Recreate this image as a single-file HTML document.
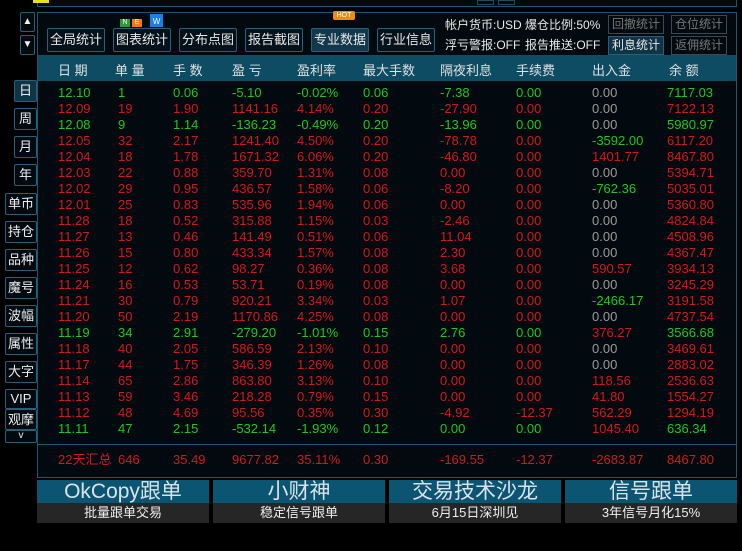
<!DOCTYPE html>
<html><head><meta charset="utf-8"><style>
*{margin:0;padding:0;box-sizing:border-box}
body{width:742px;height:551px;background:#000;position:relative;overflow:hidden;font-family:"Liberation Sans","Noto Sans CJK SC",sans-serif;font-size:13px;color:#ddd}
.a{position:absolute}
.panel{border:1px solid #1d5670;background:#020a10}
.btn{position:absolute;border:1px solid #2b5f78;border-radius:2px;color:#e8e8e8;text-align:center;font-size:13px;background:#03121a}
.sb{position:absolute;border:1px solid #2b5f78;border-radius:2px;color:#eee;text-align:center;background:#020a10;font-size:13px}
.hd{position:absolute;top:55px;left:38px;width:698px;height:26px;background:#0e4c63}
.hd span{position:absolute;top:5px;color:#e0e0e0;font-size:13px}
.r{position:absolute;left:38px;width:698px;height:16px;line-height:16px}
.r span{position:absolute}
.r span:nth-child(1){left:20px}.r span:nth-child(2){left:80px}.r span:nth-child(3){left:135px}.r span:nth-child(4){left:194px}.r span:nth-child(5){left:259px}.r span:nth-child(6){left:325px}.r span:nth-child(7){left:402px}.r span:nth-child(8){left:478px}.r span:nth-child(9){left:554px}.r span:nth-child(10){left:629px}
.g{color:#23c41f}.d{color:#d11a1a}.y{color:#9a9a9a}
.ban{position:absolute;top:480px;width:172px;height:43px}
.ban .t{height:23px;background:#0b5572;color:#d8e4ea;font-size:21px;text-align:center;line-height:24px}
.ban .b{height:20px;background:#262626;color:#eee;font-size:13px;text-align:center;line-height:20px}
.sm{position:absolute;border:1px solid #3a4a52;color:#777;font-size:12px;text-align:center;height:19px;line-height:17px;width:58px}
</style></head><body>
<div class="a panel" style="left:37px;top:-2px;width:700px;height:9px"></div>
<div class="a" style="left:33px;top:0;width:16px;height:3px;background:#e8e020"></div>
<div class="a" style="left:477px;top:0;width:17px;height:5px;border:1px solid #244a5a"></div>
<div class="a" style="left:498px;top:0;width:17px;height:5px;border:1px solid #244a5a"></div>
<div class="a panel" style="left:37px;top:12px;width:700px;height:466px"></div>
<div class="sb" style="left:20px;top:12px;width:15px;height:20px;font-size:10px;line-height:18px">▲</div>
<div class="sb" style="left:20px;top:35px;width:15px;height:20px;font-size:10px;line-height:18px">▼</div>
<div class="btn" style="left:47px;top:28px;width:58px;height:24px;line-height:22px">全局统计</div>
<div class="btn" style="left:113px;top:28px;width:58px;height:24px;line-height:22px">图表统计</div>
<div class="btn" style="left:179px;top:28px;width:58px;height:24px;line-height:22px">分布点图</div>
<div class="btn" style="left:245px;top:28px;width:58px;height:24px;line-height:22px">报告截图</div>
<div class="btn" style="left:311px;top:28px;width:58px;height:24px;line-height:22px;background:#11394b">专业数据</div>
<div class="btn" style="left:377px;top:28px;width:58px;height:24px;line-height:22px">行业信息</div>
<div class="a" style="left:120px;top:19px;width:10px;height:8px;background:#2e9a3c;color:#fff;font-size:7px;text-align:center;line-height:8px">N</div>
<div class="a" style="left:132px;top:19px;width:10px;height:8px;background:#f07c10;color:#fff;font-size:7px;text-align:center;line-height:8px">E</div>
<div class="a" style="left:150px;top:14px;width:13px;height:13px;background:#1a7ee8;color:#fff;font-size:8px;text-align:center;line-height:16px">W</div>
<div class="a" style="left:333px;top:11px;width:22px;height:9px;background:#f08a10;color:#fff;font-size:7px;text-align:center;line-height:9px;border-radius:2px">HOT</div>
<div class="a" style="left:445px;top:16px;color:#e8e8e8;font-size:12px">帐户货币:USD</div>
<div class="a" style="left:525px;top:16px;color:#e8e8e8;font-size:12px">爆仓比例:50%</div>
<div class="a" style="left:445px;top:36px;color:#e8e8e8;font-size:12px">浮亏警报:OFF</div>
<div class="a" style="left:525px;top:36px;color:#e8e8e8;font-size:12px">报告推送:OFF</div>
<div class="sm" style="left:608px;top:15px;width:56px">回撤统计</div>
<div class="sm" style="left:671px;top:15px;width:56px">仓位统计</div>
<div class="sm" style="left:608px;top:36px;width:56px;color:#e8e8e8;border-color:#2b5f78;background:#0e3446">利息统计</div>
<div class="sm" style="left:671px;top:36px;width:56px">返佣统计</div>
<div class="hd"><span style="left:20px">日 期</span><span style="left:77px">单 量</span><span style="left:135px">手 数</span><span style="left:194px">盈 亏</span><span style="left:259px">盈利率</span><span style="left:325px">最大手数</span><span style="left:402px">隔夜利息</span><span style="left:478px">手续费</span><span style="left:554px">出入金</span><span style="left:631px">余 额</span></div>
<div class="sb" style="left:14px;top:80px;width:23px;height:22px;line-height:20px;background:#0e3446">日</div>
<div class="sb" style="left:14px;top:108px;width:23px;height:22px;line-height:20px">周</div>
<div class="sb" style="left:14px;top:136px;width:23px;height:22px;line-height:20px">月</div>
<div class="sb" style="left:14px;top:164px;width:23px;height:22px;line-height:20px">年</div>
<div class="sb" style="left:5px;top:193px;width:32px;height:22px;line-height:20px">单币</div>
<div class="sb" style="left:5px;top:221px;width:32px;height:22px;line-height:20px">持仓</div>
<div class="sb" style="left:5px;top:249px;width:32px;height:22px;line-height:20px">品种</div>
<div class="sb" style="left:5px;top:277px;width:32px;height:22px;line-height:20px">魔号</div>
<div class="sb" style="left:5px;top:305px;width:32px;height:22px;line-height:20px">波幅</div>
<div class="sb" style="left:5px;top:333px;width:32px;height:22px;line-height:20px">属性</div>
<div class="sb" style="left:5px;top:361px;width:32px;height:22px;line-height:20px">大字</div>
<div class="sb" style="left:5px;top:389px;width:32px;height:20px;line-height:18px">VIP</div>
<div class="sb" style="left:5px;top:409px;width:32px;height:21px;line-height:19px">观摩</div>
<div class="sb" style="left:5px;top:430px;width:32px;height:13px;line-height:10px;font-size:10px">v</div>

<div class="r g" style="top:85px"><span>12.10</span><span>1</span><span>0.06</span><span>-5.10</span><span>-0.02%</span><span>0.06</span><span>-7.38</span><span>0.00</span><span class="y">0.00</span><span>7117.03</span></div>
<div class="r d" style="top:101px"><span>12.09</span><span>19</span><span>1.90</span><span>1141.16</span><span>4.14%</span><span>0.20</span><span>-27.90</span><span>0.00</span><span class="y">0.00</span><span>7122.13</span></div>
<div class="r g" style="top:117px"><span>12.08</span><span>9</span><span>1.14</span><span>-136.23</span><span>-0.49%</span><span>0.20</span><span>-13.96</span><span>0.00</span><span class="y">0.00</span><span>5980.97</span></div>
<div class="r d" style="top:133px"><span>12.05</span><span>32</span><span>2.17</span><span>1241.40</span><span>4.50%</span><span>0.20</span><span>-78.78</span><span>0.00</span><span class="g">-3592.00</span><span>6117.20</span></div>
<div class="r d" style="top:149px"><span>12.04</span><span>18</span><span>1.78</span><span>1671.32</span><span>6.06%</span><span>0.20</span><span>-46.80</span><span>0.00</span><span>1401.77</span><span>8467.80</span></div>
<div class="r d" style="top:165px"><span>12.03</span><span>22</span><span>0.88</span><span>359.70</span><span>1.31%</span><span>0.08</span><span>0.00</span><span>0.00</span><span class="y">0.00</span><span>5394.71</span></div>
<div class="r d" style="top:181px"><span>12.02</span><span>29</span><span>0.95</span><span>436.57</span><span>1.58%</span><span>0.06</span><span>-8.20</span><span>0.00</span><span class="g">-762.36</span><span>5035.01</span></div>
<div class="r d" style="top:197px"><span>12.01</span><span>25</span><span>0.83</span><span>535.96</span><span>1.94%</span><span>0.06</span><span>0.00</span><span>0.00</span><span class="y">0.00</span><span>5360.80</span></div>
<div class="r d" style="top:213px"><span>11.28</span><span>18</span><span>0.52</span><span>315.88</span><span>1.15%</span><span>0.03</span><span>-2.46</span><span>0.00</span><span class="y">0.00</span><span>4824.84</span></div>
<div class="r d" style="top:229px"><span>11.27</span><span>13</span><span>0.46</span><span>141.49</span><span>0.51%</span><span>0.06</span><span>11.04</span><span>0.00</span><span class="y">0.00</span><span>4508.96</span></div>
<div class="r d" style="top:245px"><span>11.26</span><span>15</span><span>0.80</span><span>433.34</span><span>1.57%</span><span>0.08</span><span>2.30</span><span>0.00</span><span class="y">0.00</span><span>4367.47</span></div>
<div class="r d" style="top:261px"><span>11.25</span><span>12</span><span>0.62</span><span>98.27</span><span>0.36%</span><span>0.08</span><span>3.68</span><span>0.00</span><span>590.57</span><span>3934.13</span></div>
<div class="r d" style="top:277px"><span>11.24</span><span>16</span><span>0.53</span><span>53.71</span><span>0.19%</span><span>0.08</span><span>0.00</span><span>0.00</span><span class="y">0.00</span><span>3245.29</span></div>
<div class="r d" style="top:293px"><span>11.21</span><span>30</span><span>0.79</span><span>920.21</span><span>3.34%</span><span>0.03</span><span>1.07</span><span>0.00</span><span class="g">-2466.17</span><span>3191.58</span></div>
<div class="r d" style="top:309px"><span>11.20</span><span>50</span><span>2.19</span><span>1170.86</span><span>4.25%</span><span>0.08</span><span>0.00</span><span>0.00</span><span class="y">0.00</span><span>4737.54</span></div>
<div class="r g" style="top:325px"><span>11.19</span><span>34</span><span>2.91</span><span>-279.20</span><span>-1.01%</span><span>0.15</span><span>2.76</span><span>0.00</span><span class="d">376.27</span><span>3566.68</span></div>
<div class="r d" style="top:341px"><span>11.18</span><span>40</span><span>2.05</span><span>586.59</span><span>2.13%</span><span>0.10</span><span>0.00</span><span>0.00</span><span class="y">0.00</span><span>3469.61</span></div>
<div class="r d" style="top:357px"><span>11.17</span><span>44</span><span>1.75</span><span>346.39</span><span>1.26%</span><span>0.08</span><span>0.00</span><span>0.00</span><span class="y">0.00</span><span>2883.02</span></div>
<div class="r d" style="top:373px"><span>11.14</span><span>65</span><span>2.86</span><span>863.80</span><span>3.13%</span><span>0.10</span><span>0.00</span><span>0.00</span><span>118.56</span><span>2536.63</span></div>
<div class="r d" style="top:389px"><span>11.13</span><span>59</span><span>3.46</span><span>218.28</span><span>0.79%</span><span>0.15</span><span>0.00</span><span>0.00</span><span>41.80</span><span>1554.27</span></div>
<div class="r d" style="top:405px"><span>11.12</span><span>48</span><span>4.69</span><span>95.56</span><span>0.35%</span><span>0.30</span><span>-4.92</span><span>-12.37</span><span>562.29</span><span>1294.19</span></div>
<div class="r g" style="top:421px"><span>11.11</span><span>47</span><span>2.15</span><span>-532.14</span><span>-1.93%</span><span>0.12</span><span>0.00</span><span>0.00</span><span class="d">1045.40</span><span>636.34</span></div>
<div class="a" style="left:37px;top:444px;width:700px;height:1px;background:#1d5670"></div>
<div class="r d" style="top:452px"><span>22天汇总</span><span>646</span><span>35.49</span><span>9677.82</span><span>35.11%</span><span>0.30</span><span>-169.55</span><span>-12.37</span><span>-2683.87</span><span>8467.80</span></div>

<div class="ban" style="left:37px"><div class="t">OkCopy跟单</div><div class="b">批量跟单交易</div></div>
<div class="ban" style="left:213px"><div class="t">小财神</div><div class="b">稳定信号跟单</div></div>
<div class="ban" style="left:389px"><div class="t">交易技术沙龙</div><div class="b">6月15日深圳见</div></div>
<div class="ban" style="left:565px"><div class="t">信号跟单</div><div class="b">3年信号月化15%</div></div>
</body></html>
